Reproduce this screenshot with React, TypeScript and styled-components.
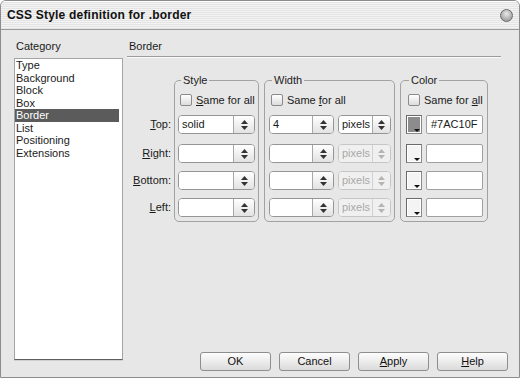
import React from "react";
import styled, { createGlobalStyle } from "styled-components";

const GlobalStyle = createGlobalStyle`
  html, body { margin: 0; padding: 0; background: #ffffff; }
  body { width: 520px; height: 378px; overflow: hidden; }
`;

const categories = ["Type", "Background", "Block", "Box", "Border", "List", "Positioning", "Extensions"];

type Side = { label: string; key: string; rest: string; style: string; width: string; color?: string };

const sides: Side[] = [
  { label: "Top:", key: "T", rest: "op:", style: "solid", width: "4", color: "#7AC10F" },
  { label: "Right:", key: "R", rest: "ight:", style: "", width: "" },
  { label: "Bottom:", key: "B", rest: "ottom:", style: "", width: "" },
  { label: "Left:", key: "L", rest: "eft:", style: "", width: "" },
];

function Arrows({ faded }: { faded?: boolean }) {
  const c = faded ? "#b4b4b4" : "#333";
  return (
    <svg width="7" height="10" viewBox="0 0 7 10">
      <polygon points="3.5,0 7,4 0,4" fill={c} />
      <polygon points="0,6 7,6 3.5,10" fill={c} />
    </svg>
  );
}

export default function App() {
  return (
    <>
      <GlobalStyle />
      <Window>
        <TitleBar>
          <Title>CSS Style definition for .border</Title>
          <CloseDot />
        </TitleBar>
        <Body>
          <LeftCol>
            <Heading>Category</Heading>
            <CategoryList>
              {categories.map((c) => (
                <CategoryItem key={c} $selected={c === "Border"}>
                  {c}
                </CategoryItem>
              ))}
            </CategoryList>
          </LeftCol>

          <RightCol>
            <Heading>Border</Heading>
            <Rule />
            <Groups>
              <LabelCol>
                {sides.map((s, i) => (
                  <SideLabel key={s.label} $first={i === 0}>
                    <u>{s.key}</u>
                    {s.rest}
                  </SideLabel>
                ))}
              </LabelCol>

              <Group $pl={3} $pr={3}>
                <Legend>Style</Legend>
                <CheckRow>
                  <CheckBox />
                  <span>
                    <u>S</u>ame for all
                  </span>
                </CheckRow>
                {sides.map((s, i) => (
                  <ControlRow key={s.label} $first={i === 0}>
                    <SpinBox $w={77}>
                      <SpinText>{s.style}</SpinText>
                      <SpinButton>
                        <Arrows />
                      </SpinButton>
                    </SpinBox>
                  </ControlRow>
                ))}
              </Group>

              <Group $pl={4} $pr={3}>
                <Legend>Width</Legend>
                <CheckRow>
                  <CheckBox />
                  <span>
                    Same <u>f</u>or all
                  </span>
                </CheckRow>
                {sides.map((s, i) => (
                  <ControlRow key={s.label} $first={i === 0}>
                    <SpinBox $w={65}>
                      <SpinText>{s.width}</SpinText>
                      <SpinButton>
                        <Arrows />
                      </SpinButton>
                    </SpinBox>
                    <SpinBox $w={53} $disabled={i > 0}>
                      <SpinText $disabled={i > 0}>pixels</SpinText>
                      <SpinButton $disabled={i > 0} $w={17}>
                        <Arrows faded={i > 0} />
                      </SpinButton>
                    </SpinBox>
                  </ControlRow>
                ))}
              </Group>

              <Group $pl={5} $pr={4}>
                <Legend>Color</Legend>
                <CheckRow>
                  <CheckBox />
                  <span>
                    Same for <u>a</u>ll
                  </span>
                </CheckRow>
                {sides.map((s, i) => (
                  <ControlRow key={s.label} $first={i === 0}>
                    <Swatch $fill={s.color ? "#8c8c8c" : "#f4f4f4"}>
                      <SwatchArrow />
                    </Swatch>
                    <ColorField>{s.color}</ColorField>
                  </ControlRow>
                ))}
              </Group>
            </Groups>

            <ButtonBar>
              <Button>OK</Button>
              <Button>Cancel</Button>
              <Button>
                <u>A</u>pply
              </Button>
              <Button>
                <u>H</u>elp
              </Button>
            </ButtonBar>
          </RightCol>
        </Body>
      </Window>
    </>
  );
}

const Window = styled.div`
  width: 520px;
  height: 378px;
  box-sizing: border-box;
  border: 1px solid #8c8c8c;
  border-radius: 6px 6px 0 0;
  background: #e7e7e7;
  display: flex;
  flex-direction: column;
  overflow: hidden;
  font-family: "Liberation Sans", Arial, sans-serif;
  font-size: 11px;
  color: #1a1a1a;
`;

const TitleBar = styled.div`
  height: 28px;
  flex: none;
  display: flex;
  align-items: center;
  justify-content: space-between;
  padding: 0 6px 0 6px;
  border-bottom: 1px solid #9a9a9a;
  background: repeating-linear-gradient(to bottom, #f3f3f3 0px, #f3f3f3 1px, #e4e4e4 1px, #e4e4e4 2px);
  box-shadow: inset 0 1px 0 #ffffff;
`;

const Title = styled.div`
  font-weight: bold;
  font-size: 12px;
  color: #111;
  letter-spacing: 0.2px;
`;

const CloseDot = styled.div`
  width: 13px;
  height: 13px;
  border-radius: 50%;
  box-sizing: border-box;
  border: 1px solid #6a6a6a;
  background: radial-gradient(circle at 50% 35%, #e8e8e8 0%, #b4b4b4 55%, #8c8c8c 100%);
`;

const Body = styled.div`
  flex: 1;
  display: flex;
  padding: 9px 11px 6px 13px;
  min-height: 0;
`;

const LeftCol = styled.div`
  width: 109px;
  display: flex;
  flex-direction: column;
  padding-bottom: 11px;
`;

const Heading = styled.div`
  height: 14px;
  line-height: 14px;
  padding-left: 2px;
  margin-bottom: 5px;
`;

const CategoryList = styled.div`
  flex: 1;
  background: #ffffff;
  border: 1px solid #a4a4a4;
  border-bottom-color: #5e5e5e;
  box-shadow: 0 1px 0 #cfcfcf;
  padding: 0 3px 0 0;
`;

const CategoryItem = styled.div<{ $selected?: boolean }>`
  height: 12.5px;
  line-height: 12.5px;
  padding-left: 1px;
  background: ${(p) => (p.$selected ? "#5b5b5b" : "transparent")};
  color: ${(p) => (p.$selected ? "#ffffff" : "#1a1a1a")};
`;

const RightCol = styled.div`
  flex: 1;
  margin-left: 4px;
  display: flex;
  flex-direction: column;
`;

const Rule = styled.div`
  height: 1px;
  margin: -2px 7px 0 0;
  background: #9c9c9c;
  box-shadow: 0 1px 0 #fafafa;
`;

const Groups = styled.div`
  display: flex;
  align-items: flex-start;
  gap: 5px;
  margin-top: 16px;
`;

const LabelCol = styled.div`
  width: 44px;
  padding-top: 42px;
  display: flex;
  flex-direction: column;
  margin-right: -2px;
`;

const SideLabel = styled.div<{ $first?: boolean }>`
  height: 19px;
  line-height: 19px;
  text-align: right;
  margin-bottom: ${(p) => (p.$first ? "10px" : "8px")};
`;

const Group = styled.fieldset<{ $pl: number; $pr: number }>`
  margin: 0;
  padding: 0 ${(p) => p.$pr}px 4px ${(p) => p.$pl}px;
  border: 1px solid #a2a2a2;
  border-radius: 5px;
  min-width: 0;
`;

const Legend = styled.legend`
  padding: 0 2px;
  margin-left: 3px;
  height: 14px;
  line-height: 14px;
  color: #222;
`;

const CheckRow = styled.div`
  display: flex;
  align-items: center;
  gap: 4px;
  height: 14px;
  margin: 6px 0 8px 2px;
  white-space: nowrap;
`;

const CheckBox = styled.span`
  width: 12px;
  height: 12px;
  box-sizing: border-box;
  border: 1px solid #8a8a8a;
  border-radius: 2px;
  background: linear-gradient(to bottom, #ffffff, #dcdcdc);
  flex: none;
`;

const ControlRow = styled.div<{ $first?: boolean }>`
  display: flex;
  gap: 4px;
  height: 19px;
  margin-bottom: ${(p) => (p.$first ? "10px" : "8px")};
  &:last-child { margin-bottom: 0; }
`;

const SpinBox = styled.div<{ $w: number; $disabled?: boolean }>`
  width: ${(p) => p.$w}px;
  height: 19px;
  box-sizing: border-box;
  display: flex;
  border: 1px solid ${(p) => (p.$disabled ? "#c6c6c6" : "#959595")};
  border-radius: 4px;
  background: #ffffff;
  box-shadow: inset 1px 1px 0 ${(p) => (p.$disabled ? "#eeeeee" : "#d4d4d4")};
  overflow: hidden;
`;

const SpinText = styled.div<{ $disabled?: boolean }>`
  flex: 1;
  padding-left: 3px;
  line-height: 17px;
  color: ${(p) => (p.$disabled ? "#a8a8a8" : "#1a1a1a")};
  background: ${(p) => (p.$disabled ? "#f0f0f0" : "#ffffff")};
`;

const SpinButton = styled.div<{ $disabled?: boolean; $w?: number }>`
  width: ${(p) => p.$w ?? 20}px;
  flex: none;
  display: flex;
  align-items: center;
  justify-content: center;
  border-left: 1px solid ${(p) => (p.$disabled ? "#d2d2d2" : "#a8a8a8")};
  background: ${(p) =>
    p.$disabled ? "#f0f0f0" : "linear-gradient(to bottom, #ffffff, #e2e2e2)"};
`;

const Swatch = styled.div<{ $fill: string }>`
  width: 16px;
  height: 19px;
  box-sizing: border-box;
  position: relative;
  border: 1px solid #8a8a8a;
  border-top-color: #6a6a6a;
  border-left-color: #6a6a6a;
  background: #ffffff;
  padding: 1px;
  &::before {
    content: "";
    display: block;
    width: 100%;
    height: 100%;
    background: ${(p) => p.$fill};
  }
`;

const SwatchArrow = styled.span`
  position: absolute;
  right: 1px;
  bottom: 1px;
  width: 0;
  height: 0;
  border-left: 3px solid transparent;
  border-right: 3px solid transparent;
  border-top: 3px solid #111;
`;

const ColorField = styled.div`
  width: 57px;
  height: 19px;
  box-sizing: border-box;
  border: 1px solid #a0a0a0;
  border-radius: 2px;
  background: #ffffff;
  padding-left: 4px;
  line-height: 17px;
`;

const ButtonBar = styled.div`
  margin-top: auto;
  display: flex;
  justify-content: flex-end;
  gap: 8px;
`;

const Button = styled.div`
  width: 71px;
  height: 19px;
  box-sizing: border-box;
  border: 1px solid #8e8e8e;
  border-radius: 3px;
  background: linear-gradient(to bottom, #fdfdfd 0%, #ececec 50%, #dadada 100%);
  text-align: center;
  line-height: 17px;
  color: #111;
`;
